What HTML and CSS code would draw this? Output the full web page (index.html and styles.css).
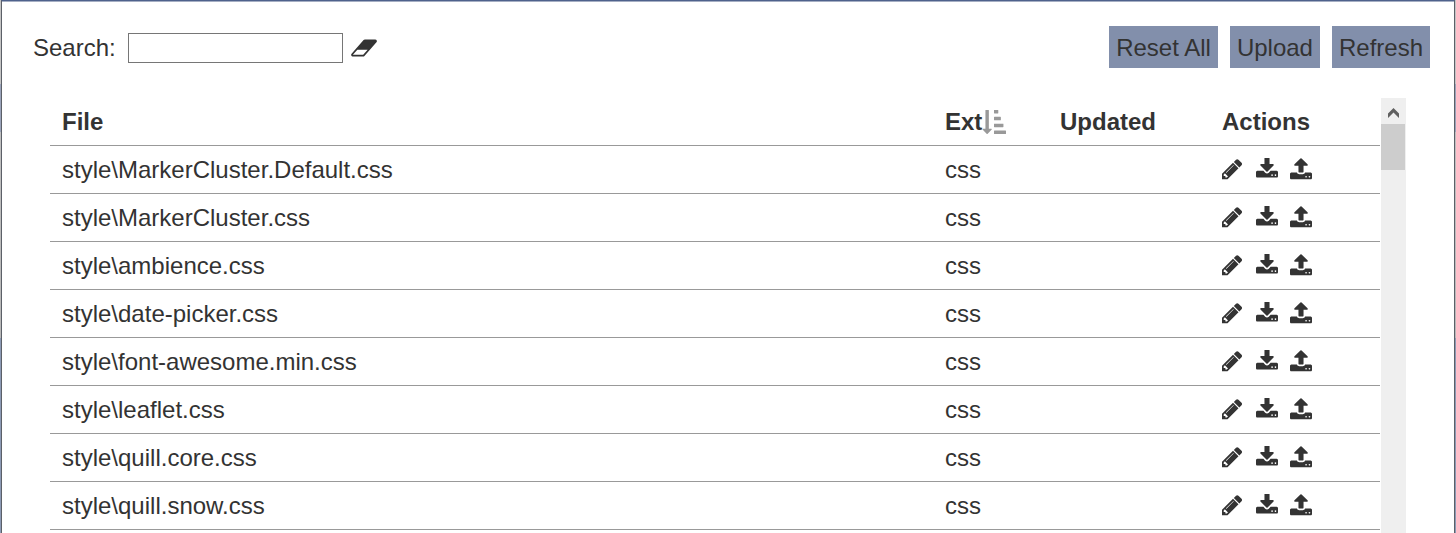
FILE: index.html
```html
<!DOCTYPE html>
<html lang="en">
<head>
<meta charset="utf-8">
<title>Files</title>
<link rel="stylesheet" href="styles.css">
<script src="files.js" defer></script>
</head>
<body>
<svg class="sprite" aria-hidden="true">
  <symbol id="pencil" viewBox="128 64 1664 1792"><path d="M491 1536l91-91-235-235-91 91v107h128v128h107zm523-928q0-22-22-22-10 0-17 7l-542 542q-7 7-7 17 0 22 22 22 10 0 17-7l542-542q7-7 7-17zm-54-192l416 416-832 832h-416v-416zm683 96q0 53-37 90l-166 166-416-416 166-165q36-38 90-38 53 0 91 38l235 234q37 39 37 91z"/></symbol>
  <symbol id="download" viewBox="64 64 1664 1792"><path d="M1344 1344q0-26-19-45t-45-19-45 19-19 45 19 45 45 19 45-19 19-45zm256 0q0-26-19-45t-45-19-45 19-19 45 19 45 45 19 45-19 19-45zm128-224v320q0 40-28 68t-68 28h-1472q-40 0-68-28t-28-68v-320q0-40 28-68t68-28h465l135 136q58 56 136 56t136-56l136-136h464q40 0 68 28t28 68zm-325-569q17 41-14 70l-448 448q-18 19-45 19t-45-19l-448-448q-31-29-14-70 17-39 59-39h256v-448q0-26 19-45t45-19h256q26 0 45 19t19 45v448h256q42 0 59 39z"/></symbol>
  <symbol id="upload" viewBox="64 64 1664 1792"><path d="M1344 1472q0-26-19-45t-45-19-45 19-19 45 19 45 45 19 45-19 19-45zm256 0q0-26-19-45t-45-19-45 19-19 45 19 45 45 19 45-19 19-45zm128-224v320q0 40-28 68t-68 28h-1472q-40 0-68-28t-28-68v-320q0-40 28-68t68-28h427q21 56 70.500 92t110.500 36h256q61 0 110.500-36t70.500-92h427q40 0 68 28t28 68zm-325-648q-17 40-59 40h-256v448q0 26-19 45t-45 19h-256q-26 0-45-19t-19-45v-448h-256q-42 0-59-40-17-39 14-69l448-448q18-19 45-19t45 19l448 448q31 30 14 69z"/></symbol>
</svg>
<main class="panel">
  <div class="toolbar">
    <form class="search">
      <label for="search">Search:</label>
      <input id="search" class="search-input" type="text">
      <button class="icon-button" type="reset" aria-label="Clear search">
        <svg class="icon icon-wide" viewBox="-64 0 1920 1792"><path d="M832 1408l336-384h-768l-336 384h768zm1013-1077q15 34 9.500 71.500t-30.500 65.500l-896 1024q-38 44-96 44h-768q-38 0-69.500-20.500t-47.500-54.500q-15-34-9.500-71.500t30.500-65.500l896-1024q38-44 96-44h768q38 0 69.500 20.500t47.500 54.500z"/></svg>
      </button>
    </form>
    <div class="buttons">
      <button class="button" type="button">Reset All</button>
      <button class="button" type="button">Upload</button>
      <button class="button" type="button">Refresh</button>
    </div>
  </div>
  <div class="list">
    <table class="files">
      <thead>
        <tr>
          <th>File</th>
          <th class="col-ext"><span class="sorted">Ext<svg class="icon icon-sort" viewBox="0 0 1792 1792" aria-hidden="true"><path d="M736 1440q0 12-10 24l-319 319q-10 9-23 9-12 0-23-9l-320-320q-15-16-7-35 8-20 30-20h192v-1376q0-14 9-23t23-9h192q14 0 23 9t9 23v1376h192q14 0 23 9t9 23zm1056 128v192q0 14-9 23t-23 9h-832q-14 0-23-9t-9-23v-192q0-14 9-23t23-9h832q14 0 23 9t9 23zm-192-512v192q0 14-9 23t-23 9h-640q-14 0-23-9t-9-23v-192q0-14 9-23t23-9h640q14 0 23 9t9 23zm-192-512v192q0 14-9 23t-23 9h-448q-14 0-23-9t-9-23v-192q0-14 9-23t23-9h448q14 0 23 9t9 23zm-192-512v192q0 14-9 23t-23 9h-256q-14 0-23-9t-9-23v-192q0-14 9-23t23-9h256q14 0 23 9t9 23z"/></svg></span></th>
          <th class="col-updated">Updated</th>
          <th class="col-actions">Actions</th>
        </tr>
      </thead>
      <tbody id="rows"></tbody>
    </table>
    <div class="scrollbar" aria-hidden="true">
      <svg class="scroll-arrow" viewBox="0 0 25 26"><path d="M7 15.500V20l5.500-5.500L18 20v-4.500L12.500 10z"/></svg>
      <div class="scroll-thumb"></div>
    </div>
  </div>
</main>
</body>
</html>
```

FILE: styles.css
```css
* {
  box-sizing: border-box;
}

body {
  height: 100vh;
  margin: 0;
  padding: 0 1px;
  overflow: hidden;
  background: linear-gradient(#c4c4c4 84px, #9aa3ba 84px, #9aa3ba 132px, #c0c0c0 132px, #b8b8b8 338px, #8c9ab5 338px);
  color: #333;
  font: 24px/28px "Liberation Sans", Arial, sans-serif;
}

button,
input {
  font: inherit;
  color: inherit;
}

.sprite {
  display: none;
}

.panel {
  display: flex;
  flex-direction: column;
  height: 100%;
  padding: 25px 24px 0 31px;
  border: 1px solid #5c6068;
  border-top-color: #4f628c;
  border-bottom: 0;
  background: #fff;
  box-shadow: inset 0 1px #a5aec3;
}

.toolbar {
  display: flex;
  align-items: center;
  justify-content: space-between;
}

.search {
  display: flex;
  align-items: center;
  padding-top: 2px;
}

.search-input {
  width: 215px;
  height: 30px;
  margin: 0 8px 0 12px;
  padding: 0 4px;
  border: 1px solid #767676;
  background: #fff;
}

.icon-button {
  display: flex;
  padding: 0;
  border: 0;
  background: none;
}

.icon {
  display: block;
  width: 24px;
  height: 24px;
  fill: #333;
}

.icon-wide {
  width: 26px;
}

.icon-action {
  width: 22px;
}

.buttons {
  display: flex;
  gap: 12px;
}

.button {
  padding: 8px 7px 6px;
  border: 0;
  background: #828fab;
}

.list {
  display: flex;
  flex: 1;
  gap: 1px;
  align-items: flex-start;
  min-height: 0;
  margin-top: 30px;
  padding: 0 24px 0 17px;
}

.files {
  flex: 1;
  table-layout: fixed;
  border-collapse: separate;
  border-spacing: 0;
}

.files th,
.files td {
  height: 48px;
  padding: 0 12px;
  border-bottom: 1px solid #999;
  text-align: left;
}

.col-ext {
  width: 115px;
}

.col-updated {
  width: 162px;
}

.col-actions {
  width: 170px;
}

.sorted {
  display: flex;
  align-items: center;
}

.icon-sort {
  fill: #999;
}

.actions {
  display: flex;
  gap: 12px;
}

.scrollbar {
  align-self: stretch;
  width: 25px;
  background: #efefef;
}

.scroll-arrow {
  display: block;
  width: 25px;
  height: 26px;
  fill: #606060;
}

.scroll-thumb {
  width: 24px;
  height: 46px;
  background: #cdcdcd;
}
```

FILE: files.js
```js
const files = [
  "style\\MarkerCluster.Default.css",
  "style\\MarkerCluster.css",
  "style\\ambience.css",
  "style\\date-picker.css",
  "style\\font-awesome.min.css",
  "style\\leaflet.css",
  "style\\quill.core.css",
  "style\\quill.snow.css"
];

const actions = [["pencil", "Edit"], ["download", "Download"], ["upload", "Upload"]];

const buttons = actions.map(([icon, label]) =>
  `<button class="icon-button" type="button" aria-label="${label}"><svg class="icon icon-action"><use href="#${icon}"/></svg></button>`
).join("");

document.getElementById("rows").innerHTML = files.map(name =>
  `<tr><td>${name}</td><td>css</td><td></td><td><div class="actions">${buttons}</div></td></tr>`
).join("");
```
